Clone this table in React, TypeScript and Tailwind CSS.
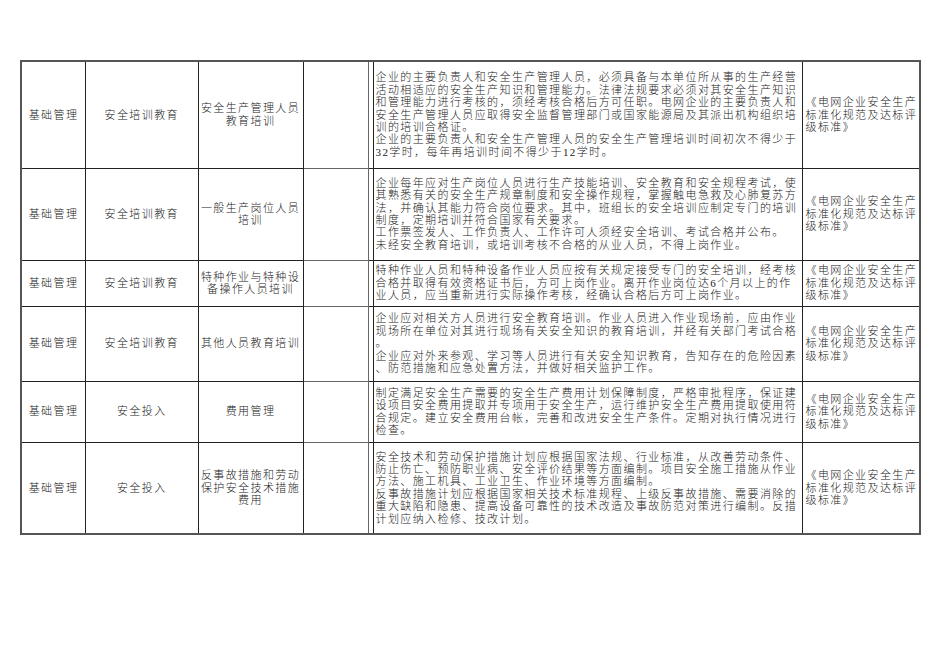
import React from "react";

type Row = {
  area: string;
  topic: string;
  item: string[];
  detail: string[];
  height: string;
};

const rows: Row[] = [
  {
    area: "基础管理",
    topic: "安全培训教育",
    item: ["安全生产管理人员", "教育培训"],
    detail: [
      "企业的主要负责人和安全生产管理人员，必须具备与本单位所从事的生产经营",
      "活动相适应的安全生产知识和管理能力。法律法规要求必须对其安全生产知识",
      "和管理能力进行考核的，须经考核合格后方可任职。电网企业的主要负责人和",
      "安全生产管理人员应取得安全监督管理部门或国家能源局及其派出机构组织培",
      "训的培训合格证。",
      "企业的主要负责人和安全生产管理人员的安全生产管理培训时间初次不得少于",
      "32学时，每年再培训时间不得少于12学时。",
    ],
    height: "h-[107px]",
  },
  {
    area: "基础管理",
    topic: "安全培训教育",
    item: ["一般生产岗位人员", "培训"],
    detail: [
      "企业每年应对生产岗位人员进行生产技能培训、安全教育和安全规程考试，使",
      "其熟悉有关的安全生产规章制度和安全操作规程，掌握触电急救及心肺复苏方",
      "法，并确认其能力符合岗位要求。其中，班组长的安全培训应制定专门的培训",
      "制度，定期培训并符合国家有关要求。",
      "工作票签发人、工作负责人、工作许可人须经安全培训、考试合格并公布。",
      "未经安全教育培训，或培训考核不合格的从业人员，不得上岗作业。",
    ],
    height: "h-[92px]",
  },
  {
    area: "基础管理",
    topic: "安全培训教育",
    item: ["特种作业与特种设", "备操作人员培训"],
    detail: [
      "特种作业人员和特种设备作业人员应按有关规定接受专门的安全培训，经考核",
      "合格并取得有效资格证书后，方可上岗作业。离开作业岗位达6个月以上的作",
      "业人员，应当重新进行实际操作考核，经确认合格后方可上岗作业。",
    ],
    height: "h-[46px]",
  },
  {
    area: "基础管理",
    topic: "安全培训教育",
    item: ["其他人员教育培训"],
    detail: [
      "企业应对相关方人员进行安全教育培训。作业人员进入作业现场前，应由作业",
      "现场所在单位对其进行现场有关安全知识的教育培训，并经有关部门考试合格",
      "。",
      "企业应对外来参观、学习等人员进行有关安全知识教育，告知存在的危险因素",
      "、防范措施和应急处置方法，并做好相关监护工作。",
    ],
    height: "h-[75px]",
  },
  {
    area: "基础管理",
    topic: "安全投入",
    item: ["费用管理"],
    detail: [
      "制定满足安全生产需要的安全生产费用计划保障制度，严格审批程序，保证建",
      "设项目安全费用提取并专项用于安全生产，运行维护安全生产费用提取使用符",
      "合规定。建立安全费用台帐，完善和改进安全生产条件。定期对执行情况进行",
      "检查。",
    ],
    height: "h-[61px]",
  },
  {
    area: "基础管理",
    topic: "安全投入",
    item: ["反事故措施和劳动", "保护安全技术措施", "费用"],
    detail: [
      "安全技术和劳动保护措施计划应根据国家法规、行业标准，从改善劳动条件、",
      "防止伤亡、预防职业病、安全评价结果等方面编制。项目安全施工措施从作业",
      "方法、施工机具、工业卫生、作业环境等方面编制。",
      "反事故措施计划应根据国家相关技术标准规程、上级反事故措施、需要消除的",
      "重大缺陷和隐患、提高设备可靠性的技术改造及事故防范对策进行编制。反措",
      "计划应纳入检修、技改计划。",
    ],
    height: "h-[92px]",
  },
];

const standard = ["《电网企业安全生产", "标准化规范及达标评", "级标准》"];

const cell = "border border-[#222] align-middle p-0";

export default function App() {
  return (
    <div className="min-h-[672px] w-[950px] bg-white pt-[60px] pl-[20px] text-[11px] font-light leading-[12.4px] tracking-[1.4px] text-[#222] [font-family:'Liberation_Serif','Noto_Sans_CJK_SC',serif]">
      <table className="w-[899px] table-fixed border-collapse border-2 border-[#555]">
        <colgroup>
          <col className="w-[64.5px]" />
          <col className="w-[112.5px]" />
          <col className="w-[105px]" />
          <col className="w-[65px]" />
          <col className="w-[5px]" />
          <col className="w-[429px]" />
          <col className="w-[118px]" />
        </colgroup>
        <tbody>
          {rows.map((r, i) => (
            <tr key={i} className={r.height}>
              <td className={`${cell} text-center`}>{r.area}</td>
              <td className={`${cell} text-center`}>{r.topic}</td>
              <td className={`${cell} text-center`}>
                {r.item.map((l) => (
                  <div key={l} className="whitespace-nowrap">{l}</div>
                ))}
              </td>
              <td className="border border-[#666] p-0"></td>
              <td className="border border-[#222] p-0"></td>
              <td className={`${cell} pl-[2px]`}>
                {r.detail.map((l, j) => (
                  <div key={j} className="whitespace-nowrap">{l}</div>
                ))}
              </td>
              <td className={`${cell} pl-[3px]`}>
                {standard.map((l) => (
                  <div key={l} className="whitespace-nowrap">{l}</div>
                ))}
              </td>
            </tr>
          ))}
        </tbody>
      </table>
    </div>
  );
}
